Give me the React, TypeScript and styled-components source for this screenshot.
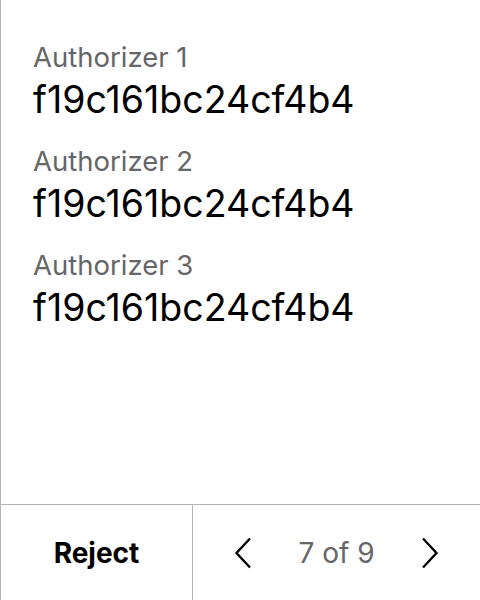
import React from "react";
import styled, { createGlobalStyle } from "styled-components";

const Global = createGlobalStyle`
  html, body { margin: 0; padding: 0; background: #fff; }
  body { font-family: Inter, "Noto Sans", sans-serif; }
`;

const Panel = styled.div`
  box-sizing: border-box;
  width: 480px;
  height: 600px;
  border-left: 1px solid #b3b3b3;
  display: flex;
  flex-direction: column;
`;

const List = styled.div`
  flex: 1;
  display: flex;
  flex-direction: column;
  gap: 22px;
  padding: 40px 32px 0;
`;

const Entry = styled.div`
  display: flex;
  flex-direction: column;
  gap: 4px;
`;

const Label = styled.div`
  font-size: 27.5px;
  line-height: 34px;
  color: #666666;
`;

const Value = styled.div`
  font-size: 37.5px;
  line-height: 44px;
  color: #000;
`;

const Footer = styled.div`
  box-sizing: border-box;
  height: 96px;
  border-top: 1px solid #b3b3b3;
  display: flex;
`;

const RejectButton = styled.button`
  width: 192px;
  border: none;
  border-right: 1px solid #b3b3b3;
  background: none;
  font-family: inherit;
  font-size: 28px;
  font-weight: 700;
  color: #000;
  padding: 0;
`;

const Pager = styled.div`
  flex: 1;
  display: flex;
  align-items: center;
  justify-content: center;
  gap: 46px;
`;

const NavButton = styled.button`
  border: none;
  background: none;
  padding: 0;
  display: flex;
  align-items: center;
`;

const Count = styled.span`
  font-size: 28px;
  color: #666666;
`;

const Chevron = ({ dir }: { dir: "left" | "right" }) => (
  <svg width="18" height="32" viewBox="0 0 18 32" fill="none">
    <path
      d={dir === "left" ? "M16 1.5 L2.5 16 L16 30.5" : "M2 1.5 L15.5 16 L2 30.5"}
      stroke="#000"
      strokeWidth="2.4"
    />
  </svg>
);

const items = [
  { label: "Authorizer 1", value: "f19c161bc24cf4b4" },
  { label: "Authorizer 2", value: "f19c161bc24cf4b4" },
  { label: "Authorizer 3", value: "f19c161bc24cf4b4" },
];

export default function App() {
  return (
    <>
      <Global />
      <Panel>
        <List>
          {items.map((it) => (
            <Entry key={it.label}>
              <Label>{it.label}</Label>
              <Value>{it.value}</Value>
            </Entry>
          ))}
        </List>
        <Footer>
          <RejectButton>Reject</RejectButton>
          <Pager>
            <NavButton aria-label="Previous"><Chevron dir="left" /></NavButton>
            <Count>7 of 9</Count>
            <NavButton aria-label="Next"><Chevron dir="right" /></NavButton>
          </Pager>
        </Footer>
      </Panel>
    </>
  );
}
